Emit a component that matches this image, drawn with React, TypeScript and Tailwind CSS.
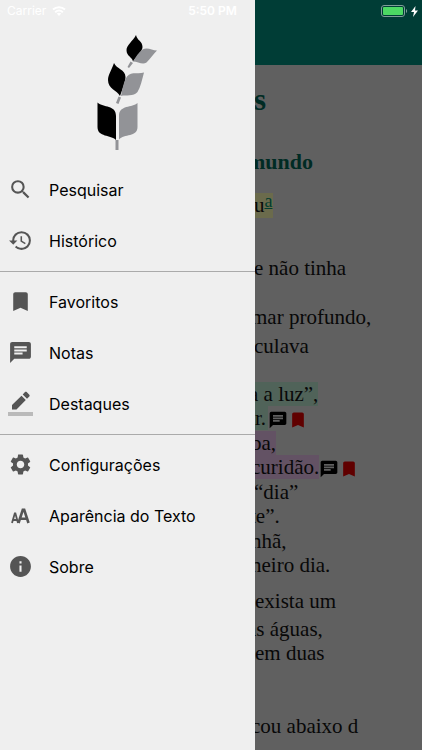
import type { ReactNode } from "react";
import {
  MdBookmark,
  MdChat,
  MdHistory,
  MdInfo,
  MdSearch,
  MdSettings,
} from "react-icons/md";

function WheatLogo() {
  return (
    <svg viewBox="0 0 62 116" className="h-[116px] w-[62px]" role="img" aria-label="Logo">
      <path fill="#000" d="M.5 67.500c6 5.500 18.500 2 18.500 13.500v24c-5-5.500-18.500-2.500-18.500-13z" />
      <path fill="#929397" d="M40.500 68c-5 5-18.500 1.500-18.500 13v23.500c5-6 18.500-2 18.500-12.500z" />
      <path fill="#929397" d="M18.500 105h3v10h-3z" />
      <path fill="#000" d="M17 28c2.500 6 11.500 6.500 11.500 14 0 5-3 12-5.500 19-3-6-12-7-12-16 0-5 4-11 6-17z" />
      <path fill="#929397" d="M47 37.500c-6 2-12.500-1.500-17 4-3 4-4.500 12-6 19.500 5-1.500 12.500 1 16.500-4 3-5 4.500-12 6.500-19.500z" />
      <path fill="#929397" d="M21.500 61.500l2.500 1-2.500 6.500-2.500-1z" />
      <path fill="#000" d="M39 0c1 5.500 6.500 6 6.500 12 0 4-5 8.500-9.500 14.500-1-5-6.500-5-6.500-11.500 0-5 6.500-9 9.500-15z" />
      <path fill="#929397" d="M60 15.500c-5 0-9.500-4-14.500-1-4 3-6.500 7-9.500 12 5 0 9.500 4 13.500 1 4-4 6.500-8 10.500-12z" />
      <path fill="#929397" d="M33.500 26.500l2.500 1.500-4 5-1.500-1z" />
    </svg>
  );
}

function HighlightIcon() {
  return (
    <svg viewBox="0 0 25 27" className="h-[27px] w-[25px] fill-[#555]" aria-hidden="true">
      <path d="M4 15v4.500h4.500L17.800 10l-4.300-4.300zM14.700 4.500l4.300 4.300 2.300-2.300c.5-.5.5-1.200 0-1.700L18.700 2c-.5-.5-1.200-.5-1.700 0z" />
      <rect y="22" width="25" height="4" fill="#bababa" />
    </svg>
  );
}

function TextSizeIcon() {
  return (
    <svg viewBox="0 0 19 16" className="h-[16px] w-[19px] fill-none stroke-[#555]" aria-hidden="true">
      <path strokeWidth="1.800" d="M1 15L3.800 5.500h.6L7 15M2 12h4.200" />
      <path strokeWidth="2.600" d="M7.500 15L11.800 1.800h1.400L17.500 15M9 10.800h7" />
    </svg>
  );
}

function MenuItem({ icon, label }: { icon: ReactNode; label: string }) {
  return (
    <li>
      <button type="button" className="flex h-[51px] w-full items-center gap-4 pl-2 text-left">
        <span className="flex w-[25px] justify-center text-[#555]">{icon}</span>
        <span className="text-[16px] leading-6 text-black">{label}</span>
      </button>
    </li>
  );
}

function Divider() {
  return <hr className="mt-[5px] mb-1 h-px border-0 bg-[#aaa]" />;
}

function Drawer() {
  return (
    <aside className="relative z-10 w-[255px] shrink-0 bg-[#efefef]">
      <div className="flex justify-center pt-[35px] pb-[13px]">
        <WheatLogo />
      </div>
      <nav aria-label="Menu">
        <ul>
          <MenuItem icon={<MdSearch size={25} />} label="Pesquisar" />
          <MenuItem icon={<MdHistory size={25} />} label="Histórico" />
        </ul>
        <Divider />
        <ul>
          <MenuItem icon={<MdBookmark size={25} />} label="Favoritos" />
          <MenuItem icon={<MdChat size={25} />} label="Notas" />
          <MenuItem icon={<HighlightIcon />} label="Destaques" />
        </ul>
        <Divider />
        <ul>
          <MenuItem icon={<MdSettings size={25} />} label="Configurações" />
          <MenuItem icon={<TextSizeIcon />} label="Aparência do Texto" />
          <MenuItem icon={<MdInfo size={25} />} label="Sobre" />
        </ul>
      </nav>
    </aside>
  );
}

function StatusBar() {
  return (
    <div className="absolute inset-x-0 top-0 z-20 grid h-[22px] grid-cols-3 items-center pr-1 pl-[7px] text-[12px] text-white">
      <span className="flex items-center gap-[6px]">
        Carrier
        <svg viewBox="0 0 14 10" className="h-[10px] w-[14px]" fill="none" stroke="#fff" strokeWidth="2" aria-hidden="true">
          <path d="M1 3.600c3.500-3.200 8.500-3.200 12 0M3.200 6.200c2.300-2 5.300-2 7.600 0" />
          <path d="M4.800 7.600L7 10l2.200-2.400c-1.300-1-3.100-1-4.400 0z" fill="#fff" stroke="none" />
        </svg>
      </span>
      <span className="text-center font-semibold">5:50 PM</span>
      <span className="flex items-center justify-end gap-[3px]">
        <svg viewBox="0 0 27 12" className="h-[12px] w-[27px]" aria-hidden="true">
          <rect x="0.500" y="0.500" width="23" height="11" rx="2.500" fill="none" stroke="#7f9d99" />
          <rect x="2" y="2" width="20" height="8" rx="1" fill="#4cd964" />
          <path d="M25 4v4c1.500-.5 1.500-3.500 0-4z" fill="#7f9d99" />
        </svg>
        <svg viewBox="0 0 7 11" className="h-[11px] w-[7px]" aria-hidden="true">
          <path d="M4.500 0L0 6h3L2 11l5-6.500H4z" fill="#fff" />
        </svg>
      </span>
    </div>
  );
}

function Marks() {
  return (
    <span className="inline-flex items-center align-middle">
      <MdChat size={20} className="text-black" />
      <MdBookmark size={20} className="text-[#600000]" />
    </span>
  );
}

function Reader() {
  return (
    <main className="min-w-0 flex-1 overflow-hidden bg-[#606060] font-['Liberation_Serif',serif] text-[21px] leading-6 whitespace-nowrap text-[#080808]">
      <div className="h-[65px] bg-[#003d36]" />
      <h1 className="-ml-px pt-[17px] text-[31px] leading-9 font-bold text-[#002b24]">s</h1>
      <h2 className="-ml-2 pt-8 text-[22px] leading-6 font-bold text-[#002b24]">mundo</h2>
      <p className="pt-[19px]">
        <span className="-ml-px inline-block bg-[#6b6b4c]">
          u<a href="#nota-a" className="relative -top-[5px] text-[18px] text-[#003d30] underline">a</a>
        </span>
      </p>
      <p className="-ml-px pt-[38px]">e não tinha</p>
      <p className="-ml-1 pt-[25px]">mar profundo,</p>
      <p className="-ml-px pt-[5px]">culava</p>
      <div className="flex flex-col gap-px pt-6">
        <p>
          <span className="-ml-2 inline-block bg-[#506359] pl-[2px]">a a luz”,</span>
          <br />
          <span className="inline-block bg-[#506359] pr-[2px]">r.</span>
          <Marks />
        </p>
        <p>
          <span className="-ml-1 inline-block bg-[#635264]">ba,</span>
          <br />
          <span className="-ml-1 inline-block bg-[#635264]">curidão.</span>
          <Marks />
        </p>
        <p className="-ml-px">
          “dia”
          <br />
          <span className="-ml-1">te”.</span>
        </p>
        <p className="-ml-1">
          nhã,
          <br />
          neiro dia.
        </p>
      </div>
      <p className="pt-3">exista um</p>
      <p className="-ml-2 pt-1">as águas,</p>
      <p>em duas</p>
      <p className="-ml-1 pt-[49px] pb-3">cou abaixo d</p>
    </main>
  );
}

export default function App() {
  return (
    <div className="relative flex min-h-screen overflow-hidden bg-[#606060] font-['Inter',sans-serif]">
      <StatusBar />
      <Drawer />
      <Reader />
    </div>
  );
}
